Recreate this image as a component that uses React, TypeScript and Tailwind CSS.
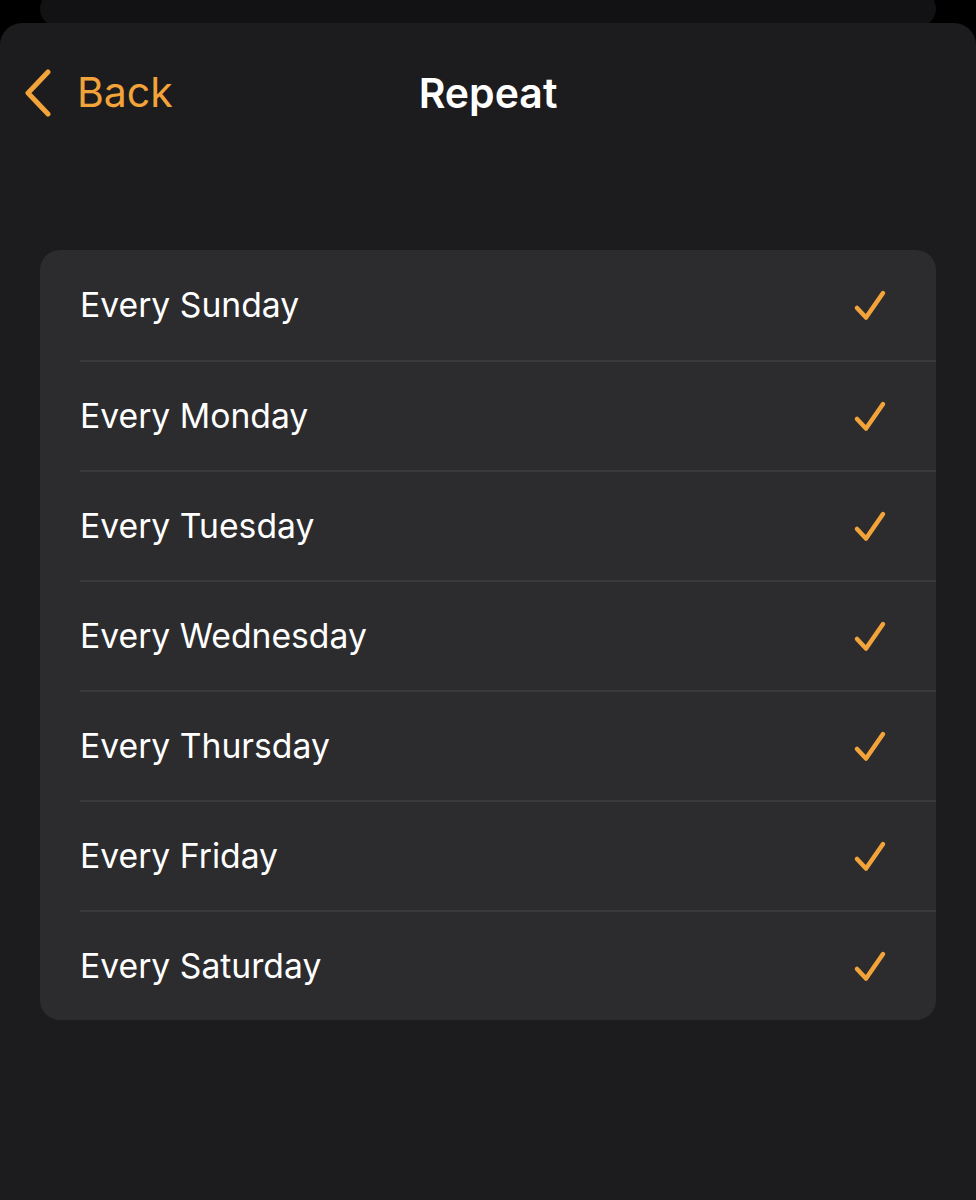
const days = [
  "Every Sunday",
  "Every Monday",
  "Every Tuesday",
  "Every Wednesday",
  "Every Thursday",
  "Every Friday",
  "Every Saturday",
]

function Check() {
  return (
    <svg width="36" height="36" viewBox="0 0 36 36" fill="none" className="mt-[3px]">
      <path
        d="M5 19 L14 28.5 L31 4"
        stroke="#f2a33a"
        strokeWidth="4.5"
        strokeLinecap="round"
        strokeLinejoin="round"
      />
    </svg>
  )
}

function Chevron() {
  return (
    <svg width="32" height="48" viewBox="0 0 32 48" fill="none">
      <path
        d="M26 3 L6 24 L26 45"
        stroke="#f2a33a"
        strokeWidth="5"
        strokeLinecap="round"
        strokeLinejoin="round"
      />
    </svg>
  )
}

export default function App() {
  return (
    <main
      className="h-[1200px] w-[976px] overflow-hidden bg-black"
      style={{ fontFamily: "Inter, 'Noto Sans', sans-serif" }}
    >
      {/* card stacked behind */}
      <div className="mx-10 -mt-2 h-[34px] rounded-[20px] bg-[#121214]" />
      {/* sheet */}
      <div className="-mt-[3px] h-[1200px] rounded-t-[22px] bg-[#1c1c1e]">
        <header className="relative flex h-[140px] items-center">
          <button className="relative z-10 flex items-center gap-[23px] pl-[22px] text-[41px] leading-none text-[#f2a33a]">
            <Chevron />
            <span className="-mt-[1px]">Back</span>
          </button>
          <h1 className="absolute inset-x-0 top-0 flex h-[140px] items-center justify-center text-[41px] font-semibold leading-none text-white">
            Repeat
          </h1>
        </header>
        <section className="mx-10 mt-[87px] overflow-hidden rounded-[20px] bg-[#2c2c2e]">
          {days.map((day, i) => (
            <div key={day} className="pl-10">
              {i > 0 && <div className="h-[2px] bg-[#3a3a3d]" />}
              <div className={`flex items-center justify-between pr-[48px] ${i > 0 ? "h-[108px]" : "h-[110px]"}`}>
                <span className="text-[33.7px] leading-none text-white">{day}</span>
                <Check />
              </div>
            </div>
          ))}
        </section>
      </div>
    </main>
  )
}
